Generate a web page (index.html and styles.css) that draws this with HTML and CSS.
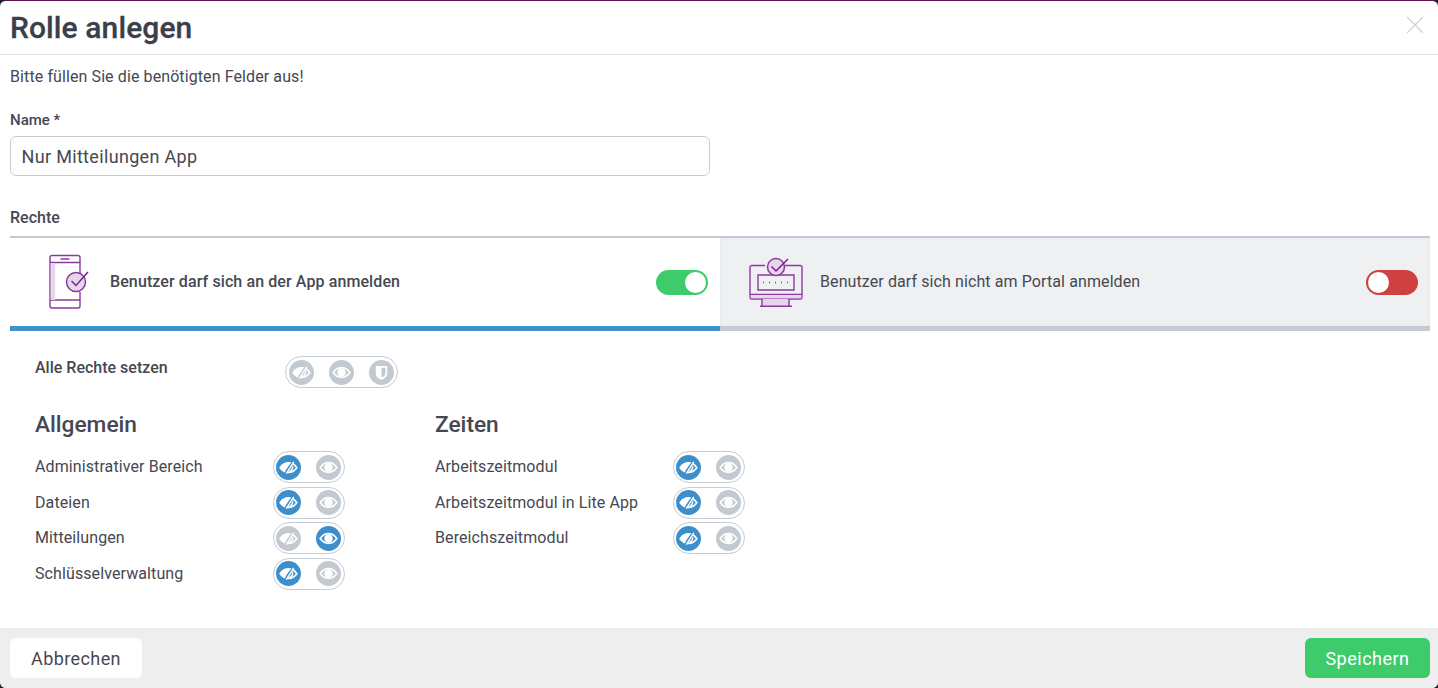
FILE: index.html
```html
<!DOCTYPE html>
<html lang="de">
<head>
<meta charset="utf-8">
<title>Rolle anlegen</title>
<link rel="stylesheet" href="styles.css">
</head>
<body>
<svg class="defs" width="0" height="0" aria-hidden="true">
  <symbol id="eye-off" viewBox="0 0 24 24">
    <path d="M2.500 12.200C5 8.600 8.300 6.800 12 6.800c3.700 0 7 1.800 9.500 5.400-2.500 3.600-5.800 5.400-9.500 5.400-3.700 0-7-1.800-9.500-5.400z" fill="none" stroke="#fff" stroke-width="1.900"/>
    <path d="M2.500 12.200C5 8.600 8.300 6.800 12 6.800h2.500L8 16.500c-2.200-.8-4-2.300-5.500-4.300z" fill="#fff"/>
    <path d="M8 19.500 17.500 4.500" stroke="currentColor" stroke-width="2.400"/>
    <path d="M9.500 19 18 5.500" stroke="#fff" stroke-width="1.600"/>
    <path d="M16.500 10.500a4.700 4.700 0 0 1-3.500 6" fill="none" stroke="#fff" stroke-width="1.700"/>
  </symbol>
  <symbol id="eye" viewBox="0 0 24 24">
    <path d="M2.500 12C5 8.400 8.300 6.500 12 6.500s7 1.900 9.500 5.500c-2.500 3.600-5.800 5.500-9.500 5.500S5 15.600 2.500 12z" fill="none" stroke="#fff" stroke-width="1.900"/>
    <circle cx="12" cy="12" r="4.800" fill="#fff"/>
  </symbol>
  <symbol id="shield" viewBox="0 0 24 24">
    <path d="M5.500 4.500h13v8.500c0 3.600-2.800 5.600-6.500 7.300-3.700-1.700-6.500-3.700-6.500-7.300z" fill="#fff"/>
    <path d="M12 6.500h4.500v6.300c0 2.300-1.800 3.600-4.500 5z" fill="currentColor"/>
  </symbol>
</svg>
<main class="modal">
  <header class="modal-head">
    <h1 class="title">Rolle anlegen</h1>
    <svg class="close" viewBox="0 0 18 18" aria-label="Schließen"><path d="M1 1 17 17M17 1 1 17" stroke="#ccd2da" stroke-width="1.300" fill="none"/></svg>
  </header>
  <div class="modal-body">
    <p class="intro">Bitte füllen Sie die benötigten Felder aus!</p>
    <label class="field-label" for="name">Name *</label>
    <input class="text-input" id="name" type="text" value="Nur Mitteilungen App">
    <div class="rights-label">Rechte</div>
    <div class="tabs">
      <div class="tab tab-active">
        <svg class="tab-icon tab-icon-app" viewBox="0 0 42 56" fill="none" stroke="#8b3a9f" stroke-width="1.400">
          <path d="M32 19V3.500a2 2 0 0 0-2-2H4a2 2 0 0 0-2 2V52a2 2 0 0 0 2 2h26a2 2 0 0 0 2-2V38" />
          <path d="M2 8.500h30M2 46h30M12.500 5h9" />
          <path d="M2.700 9h4.500v37H2.700z" fill="#e6d6ea" stroke="none"/>
          <circle cx="28" cy="28" r="9.500" fill="#e6d6ea" stroke-width="1.500"/>
          <path d="M23.500 27l4.500 4.500L40 18" stroke="#7d1f93" stroke-width="1.500"/>
        </svg>
        <span class="tab-text tab-text-strong">Benutzer darf sich an der App anmelden</span>
        <span class="switch switch-on"><span class="knob"></span></span>
      </div>
      <div class="tab tab-idle">
        <svg class="tab-icon tab-icon-web" viewBox="0 0 54 50" fill="none" stroke="#8b3a9f" stroke-width="1.400">
          <path d="M16 8.500H3a2 2 0 0 0-2 2V40a2 2 0 0 0 2 2h48a2 2 0 0 0 2-2V10.500a2 2 0 0 0-2-2H36" />
          <path d="M1 37.500h52" />
          <path d="M1.700 38h50.600v3.300H1.700z" fill="#e6d6ea" stroke="none"/>
          <path d="M9 18h36v15H9z" />
          <path d="M14 25.500h1m5 0h1m5 0h1m5 0h1m5 0h1" stroke-width="1.600"/>
          <path d="M13 42h27v7H13z" fill="#e6d6ea" stroke="none"/>
          <path d="M13 42v7.500M40 42v7.500M11 49.300h32" />
          <circle cx="27" cy="10" r="8.500" fill="#e6d6ea" stroke-width="1.500"/>
          <path d="M22.500 9.500l4.500 4.500L39 2" stroke="#7d1f93" stroke-width="1.500"/>
        </svg>
        <span class="tab-text">Benutzer darf sich nicht am Portal anmelden</span>
        <span class="switch switch-off"><span class="knob"></span></span>
      </div>
    </div>
    <div class="panel">
      <div class="all-row">
        <span class="all-label">Alle Rechte setzen</span>
        <span class="pill pill-three">
          <span class="dot"><svg><use href="#eye-off"/></svg></span>
          <span class="dot"><svg><use href="#eye"/></svg></span>
          <span class="dot"><svg><use href="#shield"/></svg></span>
        </span>
      </div>
      <div class="groups">
        <section class="group">
          <h2 class="group-title">Allgemein</h2>
          <div class="perm"><span class="perm-name">Administrativer Bereich</span><span class="pill"><span class="dot dot-on"><svg><use href="#eye-off"/></svg></span><span class="dot"><svg><use href="#eye"/></svg></span></span></div>
          <div class="perm"><span class="perm-name">Dateien</span><span class="pill"><span class="dot dot-on"><svg><use href="#eye-off"/></svg></span><span class="dot"><svg><use href="#eye"/></svg></span></span></div>
          <div class="perm"><span class="perm-name">Mitteilungen</span><span class="pill"><span class="dot"><svg><use href="#eye-off"/></svg></span><span class="dot dot-on"><svg><use href="#eye"/></svg></span></span></div>
          <div class="perm"><span class="perm-name">Schlüsselverwaltung</span><span class="pill"><span class="dot dot-on"><svg><use href="#eye-off"/></svg></span><span class="dot"><svg><use href="#eye"/></svg></span></span></div>
        </section>
        <section class="group">
          <h2 class="group-title">Zeiten</h2>
          <div class="perm"><span class="perm-name">Arbeitszeitmodul</span><span class="pill"><span class="dot dot-on"><svg><use href="#eye-off"/></svg></span><span class="dot"><svg><use href="#eye"/></svg></span></span></div>
          <div class="perm"><span class="perm-name">Arbeitszeitmodul in Lite App</span><span class="pill"><span class="dot dot-on"><svg><use href="#eye-off"/></svg></span><span class="dot"><svg><use href="#eye"/></svg></span></span></div>
          <div class="perm"><span class="perm-name">Bereichszeitmodul</span><span class="pill"><span class="dot dot-on"><svg><use href="#eye-off"/></svg></span><span class="dot"><svg><use href="#eye"/></svg></span></span></div>
        </section>
      </div>
    </div>
  </div>
  <footer class="modal-foot">
    <button class="btn btn-cancel" type="button">Abbrechen</button>
    <button class="btn btn-save" type="button">Speichern</button>
  </footer>
</main>
</body>
</html>
```
FILE: styles.css
```css
* { box-sizing: border-box; }
html, body { margin: 0; height: 100%; }
body {
  background: #1f1f24;
  font-family: Roboto, "Liberation Sans", sans-serif;
  color: #454852;
  overflow: hidden;
}
.defs { position: absolute; }
.modal {
  height: 688px;
  display: flex;
  flex-direction: column;
  background: #fff;
  border-top: 1px solid #5b0f57;
  border-radius: 6px;
  overflow: hidden;
}
.modal-head {
  height: 54px;
  flex: none;
  display: flex;
  align-items: center;
  justify-content: space-between;
  padding: 0 14px 0 10px;
  border-bottom: 1px solid #dfe1e5;
}
.title { margin: 0; font-size: 30px; line-height: 54px; font-weight: 500; letter-spacing: 0.1px; color: #3b3f4a; -webkit-text-stroke: 0.3px #3b3f4a; }
.close { width: 18px; height: 18px; margin-bottom: 6px; }
.modal-body { flex: 1; padding: 0 8px 0 10px; }
.intro { margin: 0; padding-top: 12px; font-size: 16px; line-height: 19px; letter-spacing: 0.1px; }
.field-label {
  display: block;
  margin-top: 25px;
  font-size: 15px;
  line-height: 18px;
  font-weight: 500;
}
.text-input {
  display: block;
  width: 700px;
  height: 40px;
  margin-top: 7px;
  padding: 0 10.500px;
  border: 1px solid #c6cad2;
  border-radius: 6px;
  font: 400 18px Roboto, sans-serif;
  letter-spacing: 0.33px;
  color: #454852;
}
.rights-label { margin-top: 33px; font-size: 16px; line-height: 18px; font-weight: 500; }
.tabs { display: flex; margin-top: 9px; }
.tab {
  width: 710px;
  height: 95px;
  display: flex;
  align-items: center;
  border-top: 2px solid #c6cad6;
  padding-right: 12px;
}
.tab-active { border-bottom: 5px solid #3d92cf; background: #fff; }
.tab-idle { border-bottom: 5px solid #c3cad2; background: #eff0f2; box-shadow: inset 0 0 3px rgba(0, 0, 0, 0.06); }
.tab-icon { flex: none; }
.tab-icon-app { width: 42px; height: 56px; margin-left: 38px; margin-right: 20px; }
.tab-icon-web { width: 54px; height: 50px; margin-left: 29px; margin-right: 17px; }
.tab-text { flex: 1; font-size: 16px; line-height: 20px; letter-spacing: 0.1px; }
.tab-text-strong { font-weight: 500; }
.switch {
  width: 52px;
  height: 25px;
  border-radius: 13px;
  display: flex;
  align-items: center;
  padding: 0 2px;
}
.switch-on { background: #3ecb6c; justify-content: flex-end; }
.switch-off { background: #cf4040; justify-content: flex-start; }
.knob { width: 21px; height: 21px; border-radius: 50%; background: #fff; }
.panel { padding: 0 25px; }
.all-row { display: flex; align-items: flex-start; padding-top: 25px; }
.all-label { width: 250px; font-size: 16px; line-height: 23px; font-weight: 500; }
.pill {
  display: inline-flex;
  align-items: center;
  justify-content: space-between;
  width: 72px;
  height: 32px;
  padding: 0 3px 0 2px;
  border: 1px solid #c6cad2;
  border-radius: 16px;
  background: #fff;
  flex: none;
}
.pill-three { width: 113px; padding: 0 3px; }
.dot {
  width: 25px;
  height: 25px;
  border-radius: 50%;
  background: #c3c9d1;
  color: #c3c9d1;
  display: flex;
  align-items: center;
  justify-content: center;
}
.dot svg { width: 21px; height: 21px; display: block; }
.dot-on { background: #3d8fcc; color: #3d8fcc; }
.groups { display: flex; margin-top: 23px; }
.group { width: 400px; }
.group-title { margin: 0 0 12px; font-size: 22.700px; line-height: 28px; font-weight: 500; }
.perm { display: flex; align-items: center; height: 32px; margin-bottom: 3.600px; }
.perm-name { width: 238px; font-size: 16px; line-height: 20px; letter-spacing: 0.1px; }
.modal-foot {
  height: 60px;
  flex: none;
  display: flex;
  justify-content: space-between;
  align-items: center;
  padding: 0 8px 0 10px;
  background: #eeeeee;
}
.btn {
  height: 40px;
  border: 0;
  border-radius: 6px;
  font: 400 18px Roboto, sans-serif;
  letter-spacing: 0.4px;
}
.btn-cancel { width: 132px; background: #fff; color: #454852; }
.btn-save { width: 125px; background: #3ecb6c; color: #fff; letter-spacing: 0.5px; }
```
